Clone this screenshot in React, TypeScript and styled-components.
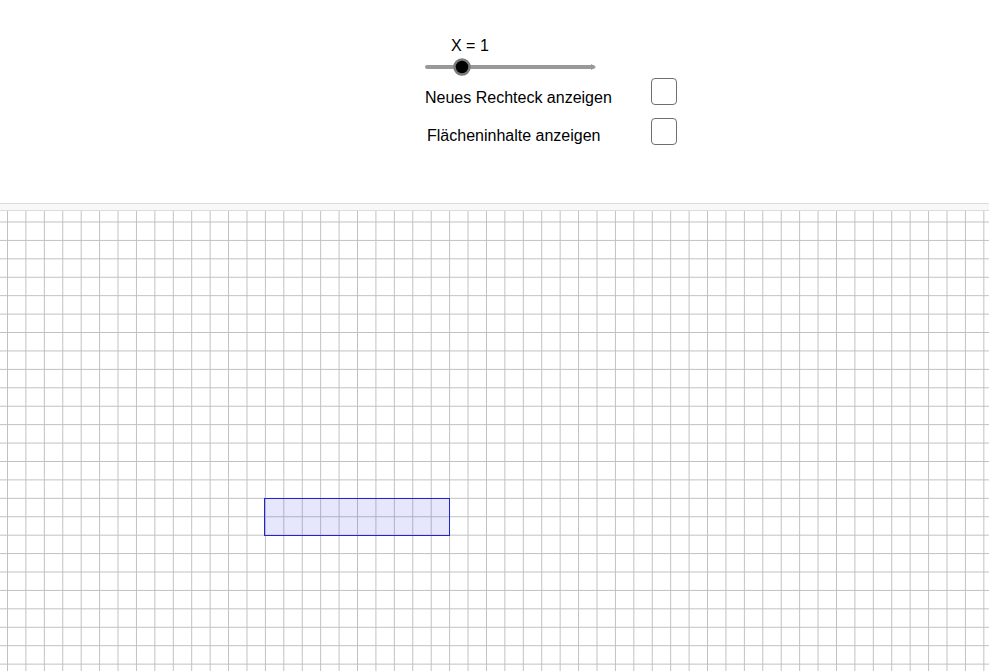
import styled, { createGlobalStyle } from 'styled-components'

const GlobalStyle = createGlobalStyle`
  html, body {
    margin: 0;
    padding: 0;
    background: #ffffff;
    font-family: "Liberation Sans", Arial, sans-serif;
    overflow: hidden;
  }
`

const Page = styled.div`
  width: 989px;
  height: 671px;
  display: flex;
  flex-direction: column;
`

const ControlPanel = styled.div`
  height: 203px;
  box-sizing: border-box;
  padding: 37px 0 0 425px;
  display: flex;
  flex-direction: column;
`

const SliderBlock = styled.div`
  display: flex;
  flex-direction: column;
  height: 41px;
`

const SliderLabel = styled.div`
  font-size: 16px;
  color: #000;
  padding-left: 26px;
  line-height: 18px;
`

const SliderTrack = styled.svg`
  display: block;
  margin-top: 2px;
`

const OptionRow = styled.div<{ $labelOffset: number; $labelTop: number }>`
  display: flex;
  align-items: flex-start;
  height: 27px;
  margin-bottom: 13px;
  padding-left: ${p => p.$labelOffset}px;

  & > span {
    margin-top: ${p => p.$labelTop}px;
  }
`

const OptionLabel = styled.span<{ $width: number }>`
  font-size: 16px;
  line-height: 18px;
  color: #000;
  width: ${p => p.$width}px;
`

const CheckBox = styled.div`
  width: 24px;
  height: 25px;
  border: 1.5px solid #6f6f6f;
  border-radius: 4px;
  background: #fff;
`

const Divider = styled.div`
  height: 6px;
  background: #f8f8f8;
  border-top: 1px solid #dcdcdc;
  border-bottom: 1px solid #dcdcdc;
`

const GRID = 18.43

const Canvas = styled.div`
  position: relative;
  flex: 1;
  background-color: #fff;
  background-image:
    linear-gradient(to right, #c0c0c0 1px, transparent 1px),
    linear-gradient(to bottom, #c0c0c0 1px, transparent 1px);
  background-size: ${GRID}px ${GRID}px;
  background-position: 7px 10.5px;
`

const Rectangle = styled.div`
  position: absolute;
  left: 264.3px;
  top: 287.2px;
  width: ${GRID * 10 + 1}px;
  height: ${GRID * 2 + 1}px;
  box-sizing: border-box;
  border: 1.5px solid #2323d6;
  background: rgba(60, 60, 230, 0.13);
`

const Slider = () => (
  <SliderTrack width="175" height="20" viewBox="0 0 175 20">
    <line x1="2" y1="10" x2="168" y2="10" stroke="#999" strokeWidth="4" strokeLinecap="round" />
    <path d="M166 7 L171 10 L166 13 Z" fill="#999" />
    <circle cx="37" cy="10" r="7.5" fill="#000" stroke="#7a7a7a" strokeWidth="2.5" />
  </SliderTrack>
)

export default function App() {
  return (
    <Page>
      <GlobalStyle />
      <ControlPanel>
        <SliderBlock>
          <SliderLabel>X = 1</SliderLabel>
          <Slider />
        </SliderBlock>
        <OptionRow $labelOffset={0} $labelTop={11}>
          <OptionLabel $width={226}>Neues Rechteck anzeigen</OptionLabel>
          <CheckBox />
        </OptionRow>
        <OptionRow $labelOffset={2} $labelTop={9}>
          <OptionLabel $width={224}>Flächeninhalte anzeigen</OptionLabel>
          <CheckBox />
        </OptionRow>
      </ControlPanel>
      <Divider />
      <Canvas>
        <Rectangle />
      </Canvas>
    </Page>
  )
}
